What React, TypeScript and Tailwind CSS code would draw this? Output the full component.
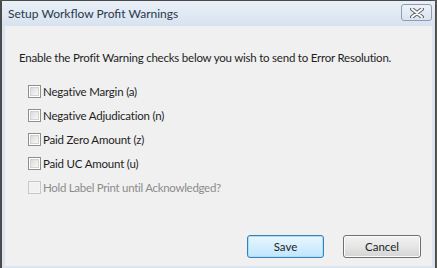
import React from 'react';

const font = { fontFamily: 'Lato, "Noto Sans", sans-serif' };

type CheckRowProps = {
  label: string;
  disabled?: boolean;
};

function CheckRow({ label, disabled }: CheckRowProps) {
  return (
    <div className="flex h-[24px] items-center gap-[2px]">
      <div
        className={
          disabled
            ? 'h-[13px] w-[13px] border border-[#c8c8c8] bg-[#f4f4f4] p-[1px]'
            : 'h-[13px] w-[13px] border border-[#8e8f8f] bg-white p-[1px]'
        }
      >
        <div
          className={
            disabled
              ? 'h-full w-full bg-[#f0f0f0]'
              : 'h-full w-full border border-[#d2d2d2] bg-gradient-to-br from-[#dcdcdc] to-[#f8f8f8]'
          }
        />
      </div>
      <span
        className={
          disabled
            ? 'whitespace-nowrap text-[11.5px] tracking-[-0.3px] text-[#8c8c8c]'
            : 'whitespace-nowrap text-[11.5px] tracking-[-0.2px] text-[#1e1e1e]'
        }
      >
        {label}
      </span>
    </div>
  );
}

export default function App() {
  return (
    <div className="h-[268px] w-[437px] overflow-hidden bg-[#5a5a52]" style={font}>
      <div className="flex h-[268px] w-[436px] flex-col rounded-tl-[3px] rounded-tr-[5px] border-l-2 border-r border-t border-[#4a4a4a] bg-[#dbe5f1]">
        {/* title bar */}
        <div className="flex h-[25px] shrink-0 items-center justify-between bg-gradient-to-b from-[#e9eff7] to-[#d8e3f0] pl-[6px] pr-[3px]">
          <span className="whitespace-nowrap text-[12px] text-[#2a374a]">Setup Workflow Profit Warnings</span>
          <div className="mb-[2px] flex h-[17px] w-[31px] items-center justify-center rounded-[3px] border border-[#8c9cb4] bg-gradient-to-b from-[#eef2f8] to-[#dbe3ee]">
            <svg width="14" height="10" viewBox="0 0 14 10">
              <path d="M2 1 L12 9 M12 1 L2 9" stroke="#5b6472" strokeWidth="4" strokeLinecap="round" />
              <path d="M2 1 L12 9 M12 1 L2 9" stroke="#ffffff" strokeWidth="2" strokeLinecap="round" />
            </svg>
          </div>
        </div>

        {/* client */}
        <div className="ml-[3px] mr-[3px] flex flex-1 flex-col bg-[#f0f0f0]">
          <p className="ml-[14px] mt-[23px] whitespace-nowrap text-[11.5px] tracking-[-0.22px] text-[#1e1e1e]">
            Enable the Profit Warning checks below you wish to send to Error Resolution.
          </p>
          <div className="ml-[23px] mt-[13px] flex flex-col">
            <CheckRow label="Negative Margin (a)" />
            <CheckRow label="Negative Adjudication (n)" />
            <CheckRow label="Paid Zero Amount (z)" />
            <CheckRow label="Paid UC Amount (u)" />
            <CheckRow label="Hold Label Print until Acknowledged?" disabled />
          </div>
          <div className="mt-auto mb-[8px] mr-[11px] flex justify-end gap-[19px]">
            <button className="h-[23px] w-[77px] rounded-[3px] border border-[#3c7fb1] bg-gradient-to-b from-[#eaf6fd] to-[#bee6fd] text-[11.5px] text-[#1e1e1e] shadow-[inset_0_0_0_1px_#a6e0fa]">
              Save
            </button>
            <button className="h-[23px] w-[78px] rounded-[3px] border border-[#707070] bg-gradient-to-b from-[#f2f2f2] via-[#e6e6e6] to-[#d4d4d4] text-[11.5px] text-[#1e1e1e] shadow-[inset_0_0_0_1px_#fbfbfb]">
              Cancel
            </button>
          </div>
        </div>
        <div className="h-[2px] shrink-0 bg-[#dbe5f1]" />
      </div>
    </div>
  );
}
